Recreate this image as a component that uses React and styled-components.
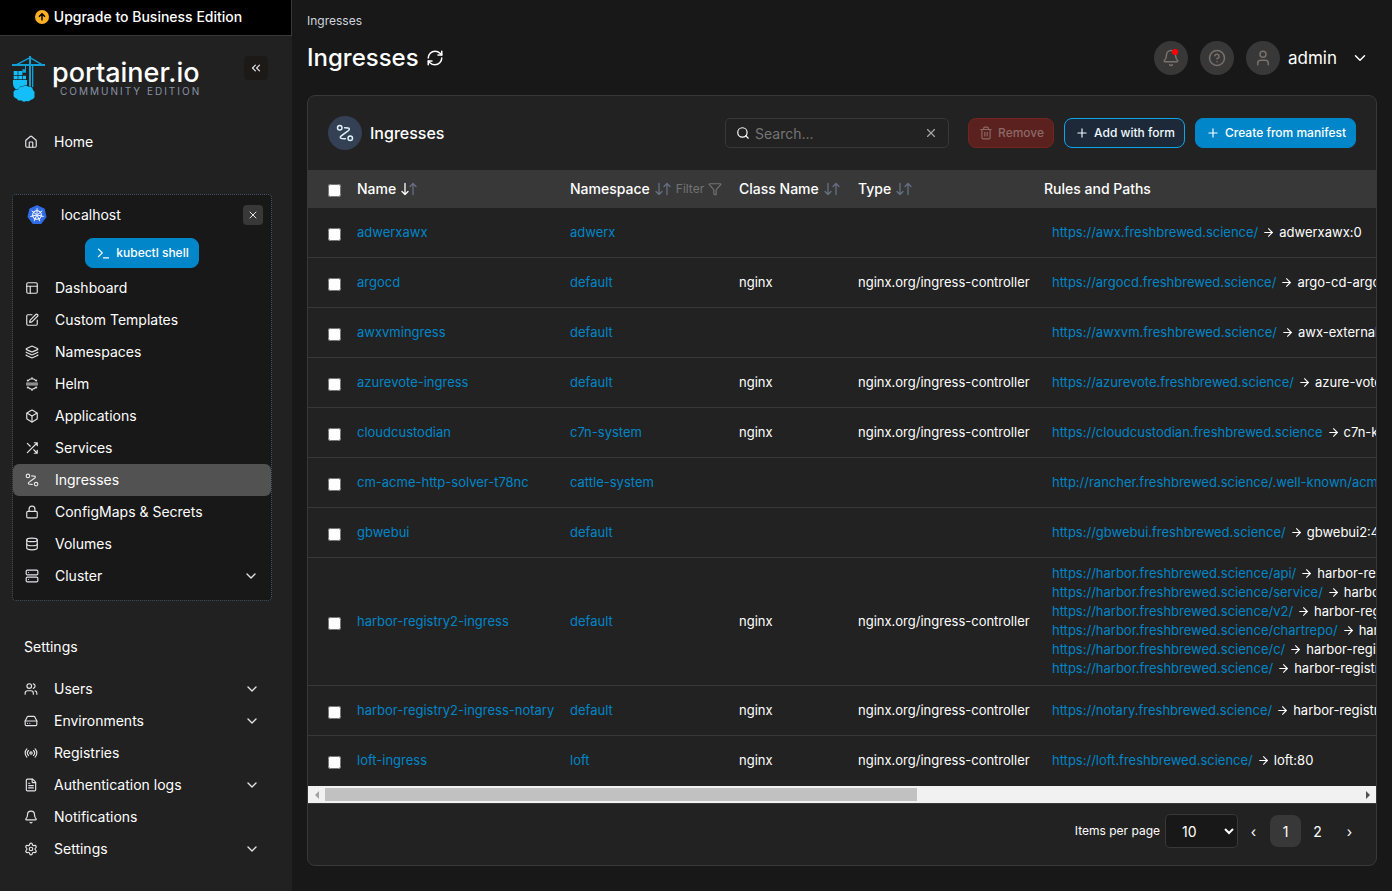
import React from "react";
import styled, { createGlobalStyle } from "styled-components";
import {
  ArrowRight,
  Bell,
  Box,
  ChevronDown,
  ChevronsLeft,
  Database,
  FileText,
  Filter,
  HardDrive,
  House,
  Layers,
  Lock,
  PanelsTopLeft,
  Plus,
  Radio,
  RefreshCw,
  Search,
  Server,
  Settings,
  SquarePen,
  Terminal,
  Trash2,
  User,
  Users,
  X,
  CircleQuestionMark,
} from "lucide-react";

const colors = {
  page: "#181818",
  panel: "#212121",
  card: "#222222",
  line: "#383838",
  active: "#525252",
  link: "#0086c9",
  muted: "#667085",
};

const GlobalStyle = createGlobalStyle`
  * {
    box-sizing: border-box;
  }

  body {
    margin: 0;
    background: ${colors.page};
    color: #ffffff;
    font-family: Inter, "Liberation Sans", sans-serif;
    font-size: 14px;
    line-height: 20px;
  }

  button,
  input,
  select {
    font-family: inherit;
  }

  a {
    color: inherit;
    text-decoration: none;
  }

  svg {
    flex-shrink: 0;
  }
`;

const Page = styled.div`
  display: flex;
  min-height: 100vh;
`;

/* sidebar */

const Sidebar = styled.aside`
  width: 292px;
  flex-shrink: 0;
  background: ${colors.panel};
`;

const UpgradeBar = styled.button`
  display: flex;
  align-items: center;
  justify-content: center;
  gap: 5px;
  width: 100%;
  height: 36px;
  padding: 0 14px 2px 0;
  border: 0;
  border-right: 1px solid ${colors.line};
  border-bottom: 1px solid ${colors.line};
  background: #000000;
  color: #ffffff;
  font-size: 14px;
  font-weight: 500;
`;

const SidebarBody = styled.div`
  padding: 20px 20px 0 12px;
`;

const Brand = styled.div`
  display: flex;
  align-items: flex-start;
  height: 46px;
  margin-bottom: 24px;
`;

const BrandText = styled.div`
  margin-left: 7px;
`;

const BrandName = styled.div`
  padding-top: 4px;
  font-size: 27px;
  line-height: 26px;
  font-weight: 500;
`;

const BrandEdition = styled.div`
  padding-left: 8px;
  color: #8a93a5;
  font-size: 10px;
  line-height: 10px;
  letter-spacing: 2px;
`;

const CollapseButton = styled.button`
  display: flex;
  align-items: center;
  justify-content: center;
  width: 24px;
  height: 24px;
  margin-left: auto;
  margin-right: 4px;
  padding: 0;
  border: 0;
  border-radius: 4px;
  background: #1c1917;
  color: #e4e4e7;
`;

const NavList = styled.ul`
  margin: 0;
  padding: 0;
  list-style: none;
`;

const NavLink = styled.a`
  display: flex;
  align-items: center;
  height: 32px;
  padding: 0 12px;
  border-radius: 6px;
  background: ${(props) => (props.$active ? colors.active : "transparent")};

  svg {
    color: #e4e4e7;
  }

  span {
    flex: 1;
    margin-left: 16px;
  }
`;

const Environment = styled.section`
  margin: 36px 0 36px;
  padding-bottom: 8px;
  border: 1px dotted #475467;
  border-radius: 4px;
  background: ${colors.page};
`;

const EnvironmentHead = styled.div`
  display: flex;
  align-items: center;
  height: 39px;
  padding: 0 8px 0 14px;

  span {
    flex: 1;
    margin-left: 14px;
  }
`;

const CloseButton = styled.button`
  display: flex;
  align-items: center;
  justify-content: center;
  width: 20px;
  height: 20px;
  padding: 0;
  border: 0;
  border-radius: 4px;
  background: ${colors.line};
  color: #e4e4e7;
`;

const ShellRow = styled.div`
  display: flex;
  justify-content: center;
  padding: 4px 0;
`;

const SidebarTitle = styled.h2`
  margin: 0 0 16px;
  padding: 0 12px;
  font-size: 14px;
  line-height: 20px;
  font-weight: 400;
`;

/* main area */

const Main = styled.main`
  flex: 1;
  min-width: 0;
  padding: 12px 15px 25px;
`;

const Breadcrumb = styled.div`
  color: #d0d5dd;
  font-size: 12px;
  line-height: 18px;
`;

const TitleRow = styled.header`
  display: flex;
  align-items: center;
  height: 56px;
  margin-bottom: 9px;
`;

const Title = styled.h1`
  margin: 0 7px 0 0;
  font-size: 24px;
  line-height: 32px;
  font-weight: 500;
`;

const PlainButton = styled.button`
  display: flex;
  align-items: center;
  padding: 0;
  border: 0;
  background: none;
  color: inherit;
`;

const HeaderTools = styled.div`
  display: flex;
  align-items: center;
  gap: 12px;
  margin-left: auto;
  padding-right: 8px;
`;

const RoundButton = styled.button`
  position: relative;
  display: flex;
  align-items: center;
  justify-content: center;
  width: 34px;
  height: 34px;
  padding: 0;
  border: 0;
  border-radius: 50%;
  background: ${colors.line};
  color: #78716c;
`;

const AlertDot = styled.i`
  position: absolute;
  top: 8px;
  right: 10px;
  width: 6px;
  height: 6px;
  border-radius: 50%;
  background: #ff0000;
`;

const UserMenu = styled(PlainButton)`
  font-size: 17px;

  span {
    margin: 0 14px 0 8px;
  }
`;

const Avatar = styled(RoundButton).attrs({ as: "i" })``;

const Card = styled.section`
  border: 1px solid ${colors.line};
  border-radius: 8px;
  background: ${colors.card};
  overflow: hidden;
`;

const CardHead = styled.div`
  display: flex;
  align-items: center;
  gap: 10px;
  height: 74px;
  padding: 0 20px;
`;

const CardIcon = styled.div`
  display: flex;
  align-items: center;
  justify-content: center;
  width: 34px;
  height: 34px;
  margin-right: -2px;
  border-radius: 50%;
  background: #344054;
  color: #e0f2fe;
`;

const CardTitle = styled.h2`
  flex: 1;
  margin: 0;
  font-size: 16px;
  line-height: 24px;
  font-weight: 500;
`;

const SearchBox = styled.label`
  display: flex;
  align-items: center;
  width: 224px;
  height: 30px;
  margin-right: 9px;
  padding: 0 10px;
  border: 1px solid ${colors.line};
  border-radius: 5px;

  input {
    flex: 1;
    min-width: 0;
    padding: 0 5px;
    border: 0;
    outline: 0;
    background: none;
    color: #ffffff;
    font-size: 14px;
  }

  input::placeholder {
    color: #757575;
  }
`;

const buttonLooks = {
  primary: "border-color: #0086c9; background: #0086c9; color: #ffffff;",
  secondary: "border-color: #0ba5ec; background: #1d2939; color: #f0f9ff;",
  danger: "border-color: #752521; background: #5a211e; color: #8c6966;",
};

const Button = styled.button`
  display: flex;
  align-items: center;
  gap: 5px;
  height: 30px;
  padding: 0 9px 0 10px;
  border: 1px solid;
  border-radius: 8px;
  font-size: 12px;
  line-height: 18px;
  font-weight: 500;
  white-space: nowrap;
  ${(props) => buttonLooks[props.$look]}
`;

const TableArea = styled.div`
  overflow: hidden;
`;

const Table = styled.table`
  width: 1865px;
  table-layout: fixed;
  border-collapse: separate;
  border-spacing: 0;
  font-size: 13px;
  line-height: 19px;
  white-space: nowrap;

  th {
    height: 38px;
    padding: 0 8px 1px;
    background: ${colors.line};
    font-size: 14px;
    font-weight: 500;
    text-align: left;
  }

  td {
    height: 50px;
    padding: 6px 8px 7px;
    border-bottom: 1px solid ${colors.line};
  }

  tr:last-child td {
    border-bottom: 0;
  }

  th:first-child,
  td:first-child {
    padding-left: 20px;
    padding-right: 0;
  }

  td:last-child {
    padding-left: 16px;
  }

  input {
    display: block;
    width: 13px;
    height: 13px;
    margin: 4px 0 0;
  }
`;

const HeadCell = styled.div`
  display: flex;
  align-items: center;
  gap: 5px;
`;

const SortButton = styled(PlainButton)`
  color: ${colors.muted};

  path:first-child {
    stroke: ${(props) => (props.$sorted ? "#ffffff" : colors.muted)};
  }
`;

const FilterButton = styled(PlainButton)`
  gap: 4px;
  color: #737373;
  font-size: 12px;
`;

const Link = styled.a`
  color: ${colors.link};
`;

const Rule = styled.div`
  display: flex;
  align-items: center;
  gap: 4px;
`;

const ScrollTrack = styled.div`
  display: flex;
  align-items: center;
  height: 17px;
  background: #f1f1f1;
`;

const ScrollArrow = styled.button`
  display: flex;
  align-items: center;
  justify-content: center;
  width: 17px;
  height: 17px;
  padding: 0;
  border: 0;
  background: none;
  color: ${(props) => (props.$end ? "#505050" : "#a3a3a3")};
`;

const ScrollRail = styled.div`
  flex: 1;
`;

const ScrollThumb = styled.div`
  width: calc(100% * 1068 / 1865);
  height: 13px;
  background: #c1c1c1;
`;

const CardFoot = styled.footer`
  display: flex;
  align-items: center;
  justify-content: flex-end;
  height: 62px;
  padding: 0 11px 7px 0;
  border-top: 1px solid ${colors.line};

  label {
    margin-right: 5px;
    font-size: 12px;
  }
`;

const PageSize = styled.select`
  width: 73px;
  height: 34px;
  padding: 0 0 0 12px;
  border: 1px solid ${colors.line};
  border-radius: 5px;
  background: ${colors.page};
  color: #ffffff;
  font-size: 14px;
`;

const Pages = styled.nav`
  display: flex;
  gap: 1px;
`;

const PageButton = styled.button`
  width: 31px;
  height: 32px;
  padding: 0;
  border: 0;
  border-radius: 8px;
  background: ${(props) => (props.$active ? colors.line : "none")};
  color: #ffffff;
  font-size: 14px;
`;

/* icons that lucide does not have */

const Stroke = ({ size = 14, width = 2, children }) => (
  <svg
    width={size}
    height={size}
    viewBox="0 0 24 24"
    fill="none"
    stroke="currentColor"
    strokeWidth={width}
    strokeLinecap="round"
    strokeLinejoin="round"
  >
    {children}
  </svg>
);

const RouteIcon = (props) => (
  <Stroke {...props}>
    <circle cx="5" cy="5" r="3" />
    <circle cx="19" cy="19" r="3" />
    <path d="M11.5 5h.43c3.05 0 4.57 0 5.15.55a2 2 0 0 1 .59 1.84c-.16.78-1.4 1.66-3.89 3.42l-4.06 2.88c-2.49 1.76-3.73 2.64-3.89 3.42a2 2 0 0 0 .59 1.84c.58.55 2.1.55 5.15.55h.93" />
  </Stroke>
);

const ShuffleIcon = (props) => (
  <Stroke {...props}>
    <path d="M16 3h5v5M4 20 21 3M21 16v5h-5M15 15l6 6M4 4l5 5" />
  </Stroke>
);

const HelmIcon = (props) => (
  <Stroke {...props}>
    <path d="M5 6.500C7 4 9.500 3 12 3s5 1 7 3.500M5 17.500C7 20 9.500 21 12 21s5-1 7-3.500" />
    <path d="M12 3V1M12 21v2M5 6.500 4 5.500M19 6.500l1-1M5 17.500l-1 1M19 17.500l1 1" />
    <path d="M2.500 10.500h19M2.500 13.500h19" strokeWidth="1.6" />
  </Stroke>
);

const SortIcon = () => (
  <svg
    width="16"
    height="16"
    viewBox="0 0 16 16"
    fill="none"
    stroke="currentColor"
    strokeWidth="1.3"
    strokeLinecap="round"
    strokeLinejoin="round"
  >
    <path d="M4 2.500v11M1 10.500l3 3 3-3" />
    <path d="M12 13.500v-11M9 5.500l3-3 3 3" />
  </svg>
);

const UpgradeIcon = () => (
  <svg width="14" height="14" viewBox="0 0 14 14">
    <circle cx="7" cy="7" r="7" fill="#fdb022" />
    <path
      d="M7 10.500V4M4 6.700 7 3.700l3 3"
      fill="none"
      stroke="#000000"
      strokeWidth="1.500"
    />
  </svg>
);

const spokes = [0, 1, 2, 3, 4, 5, 6].map((n) => (n * 360) / 7);

const KubernetesLogo = () => (
  <svg width="20" height="20" viewBox="0 0 20 20">
    <path
      d="M10 .8 17 4.100 18.800 11.900 14 18.200H6L1.200 11.900 3 4.100z"
      fill="#326ce5"
      stroke="#326ce5"
      strokeWidth="1.400"
      strokeLinejoin="round"
    />
    <g stroke="#ffffff" fill="none" strokeLinecap="round">
      <circle cx="10" cy="10" r="4.300" strokeWidth="1.100" />
      {spokes.map((angle) => (
        <path
          key={angle}
          d="M10 8.600V3.600"
          strokeWidth=".9"
          transform={`rotate(${angle} 10 10)`}
        />
      ))}
    </g>
    <circle cx="10" cy="10" r="1" fill="#ffffff" />
  </svg>
);

const CraneLogo = () => (
  <svg width="33" height="46" viewBox="36 168 99 138" fill="#13bef9">
    <g fill="#129fd3">
      <path d="M36 192h99v6H36zM87 168h6v94h-6zM96 197h4v65h-4z" />
      <path
        d="M90 173 50 194M90 173l36 21"
        fill="none"
        stroke="#129fd3"
        strokeWidth="4"
      />
      <path d="M75 197h3v21h-11v-10h8z" />
    </g>
    <path d="M41 213h12v12H41zM55 213h12v12H55zM41 227h12v11H41zM55 227h11v11H55zM68 227h10v11H68z" />
    <path d="M39 240h42v10c0 12-6 20-16 20H52c-8-2-13-10-13-20z" />
    <path
      d="M54 270c1-7 8-11 14-9 4-5 13-5 17-1 8-2 14 4 14 11 5 3 6 8 4 13 3 8-3 15-11 15-3 5-8 6-13 4-5 3-12 3-15-2-6 2-11 0-13-5-8-1-12-7-10-13-3-9 4-15 13-13z"
      stroke={colors.panel}
      strokeWidth="3"
      paintOrder="stroke"
    />
  </svg>
);

const environmentLinks = [
  { label: "Dashboard", icon: PanelsTopLeft },
  { label: "Custom Templates", icon: SquarePen },
  { label: "Namespaces", icon: Layers },
  { label: "Helm", icon: HelmIcon },
  { label: "Applications", icon: Box },
  { label: "Services", icon: ShuffleIcon },
  { label: "Ingresses", icon: RouteIcon, active: true },
  { label: "ConfigMaps & Secrets", icon: Lock },
  { label: "Volumes", icon: Database },
  { label: "Cluster", icon: Server, expandable: true },
];

const settingsLinks = [
  { label: "Users", icon: Users, expandable: true },
  { label: "Environments", icon: HardDrive, expandable: true },
  { label: "Registries", icon: Radio },
  { label: "Authentication logs", icon: FileText, expandable: true },
  { label: "Notifications", icon: Bell },
  { label: "Settings", icon: Settings, expandable: true },
];

const controller = "nginx.org/ingress-controller";

const ingresses = [
  {
    name: "adwerxawx",
    namespace: "adwerx",
    rules: [["https://awx.freshbrewed.science/", "adwerxawx:0"]],
  },
  {
    name: "argocd",
    namespace: "default",
    className: "nginx",
    rules: [["https://argocd.freshbrewed.science/", "argo-cd-argocd-server:80"]],
  },
  {
    name: "awxvmingress",
    namespace: "default",
    rules: [["https://awxvm.freshbrewed.science/", "awx-external-ip:80"]],
  },
  {
    name: "azurevote-ingress",
    namespace: "default",
    className: "nginx",
    rules: [["https://azurevote.freshbrewed.science/", "azure-vote-front:80"]],
  },
  {
    name: "cloudcustodian",
    namespace: "c7n-system",
    className: "nginx",
    rules: [["https://cloudcustodian.freshbrewed.science", "c7n-kube:80"]],
  },
  {
    name: "cm-acme-http-solver-t78nc",
    namespace: "cattle-system",
    rules: [
      [
        "http://rancher.freshbrewed.science/.well-known/acme-challenge/",
        "cm-acme-http-solver:8089",
      ],
    ],
  },
  {
    name: "gbwebui",
    namespace: "default",
    rules: [["https://gbwebui.freshbrewed.science/", "gbwebui2:4000"]],
  },
  {
    name: "harbor-registry2-ingress",
    namespace: "default",
    className: "nginx",
    rules: [
      ["https://harbor.freshbrewed.science/api/", "harbor-registry2-core:80"],
      ["https://harbor.freshbrewed.science/service/", "harbor-registry2-core:80"],
      ["https://harbor.freshbrewed.science/v2/", "harbor-registry2-core:80"],
      ["https://harbor.freshbrewed.science/chartrepo/", "harbor-registry2-core:80"],
      ["https://harbor.freshbrewed.science/c/", "harbor-registry2-core:80"],
      ["https://harbor.freshbrewed.science/", "harbor-registry2-portal:80"],
    ],
  },
  {
    name: "harbor-registry2-ingress-notary",
    namespace: "default",
    className: "nginx",
    rules: [["https://notary.freshbrewed.science/", "harbor-registry2-notary:4443"]],
  },
  {
    name: "loft-ingress",
    namespace: "loft",
    className: "nginx",
    rules: [["https://loft.freshbrewed.science/", "loft:80"]],
  },
];

const NavItem = ({ label, icon: Icon, active, expandable }) => (
  <li>
    <NavLink href="#" $active={active}>
      <Icon size={14} />
      <span>{label}</span>
      {expandable && <ChevronDown size={16} />}
    </NavLink>
  </li>
);

const Sort = ({ label, sorted }) => (
  <SortButton aria-label={`Sort by ${label}`} $sorted={sorted}>
    <SortIcon />
  </SortButton>
);

const SideMenu = () => (
  <Sidebar>
    <UpgradeBar>
      <UpgradeIcon />
      Upgrade to Business Edition
    </UpgradeBar>
    <SidebarBody>
      <Brand>
        <CraneLogo />
        <BrandText>
          <BrandName>portainer.io</BrandName>
          <BrandEdition>COMMUNITY EDITION</BrandEdition>
        </BrandText>
        <CollapseButton aria-label="Collapse sidebar">
          <ChevronsLeft size={14} />
        </CollapseButton>
      </Brand>
      <NavList>
        <NavItem label="Home" icon={House} />
      </NavList>
      <Environment>
        <EnvironmentHead>
          <KubernetesLogo />
          <span>localhost</span>
          <CloseButton aria-label="Close environment">
            <X size={12} />
          </CloseButton>
        </EnvironmentHead>
        <ShellRow>
          <Button $look="primary">
            <Terminal size={15} />
            kubectl shell
          </Button>
        </ShellRow>
        <NavList>
          {environmentLinks.map((link) => (
            <NavItem key={link.label} {...link} />
          ))}
        </NavList>
      </Environment>
      <SidebarTitle>Settings</SidebarTitle>
      <NavList>
        {settingsLinks.map((link) => (
          <NavItem key={link.label} {...link} />
        ))}
      </NavList>
    </SidebarBody>
  </Sidebar>
);

const IngressRow = ({ name, namespace, className, rules }) => (
  <tr>
    <td>
      <input type="checkbox" aria-label={`Select ${name}`} />
    </td>
    <td>
      <Link href="#">{name}</Link>
    </td>
    <td>
      <Link href="#">{namespace}</Link>
    </td>
    <td>{className}</td>
    <td>{className && controller}</td>
    <td>
      {rules.map(([url, service]) => (
        <Rule key={url}>
          <Link href="#">{url}</Link>
          <ArrowRight size={13} />
          <span>{service}</span>
        </Rule>
      ))}
    </td>
  </tr>
);

const IngressTable = () => (
  <TableArea>
    <Table>
      <colgroup>
        <col width="41" />
        <col width="213" />
        <col width="169" />
        <col width="119" />
        <col width="186" />
        <col />
      </colgroup>
      <thead>
        <tr>
          <th>
            <input type="checkbox" aria-label="Select all rows" />
          </th>
          <th>
            <HeadCell>
              Name <Sort label="Name" sorted />
            </HeadCell>
          </th>
          <th>
            <HeadCell>
              Namespace <Sort label="Namespace" />
              <FilterButton>
                Filter <Filter size={14} />
              </FilterButton>
            </HeadCell>
          </th>
          <th>
            <HeadCell>
              Class Name <Sort label="Class Name" />
            </HeadCell>
          </th>
          <th>
            <HeadCell>
              Type <Sort label="Type" />
            </HeadCell>
          </th>
          <th>Rules and Paths</th>
        </tr>
      </thead>
      <tbody>
        {ingresses.map((ingress) => (
          <IngressRow key={ingress.name} {...ingress} />
        ))}
      </tbody>
    </Table>
  </TableArea>
);

function App() {
  return (
    <Page>
      <GlobalStyle />
      <SideMenu />
      <Main>
        <Breadcrumb>Ingresses</Breadcrumb>
        <TitleRow>
          <Title>Ingresses</Title>
          <PlainButton aria-label="Refresh">
            <RefreshCw size={18} />
          </PlainButton>
          <HeaderTools>
            <RoundButton aria-label="Notifications">
              <Bell size={18} />
              <AlertDot />
            </RoundButton>
            <RoundButton aria-label="Help">
              <CircleQuestionMark size={18} />
            </RoundButton>
            <UserMenu>
              <Avatar>
                <User size={18} />
              </Avatar>
              <span>admin</span>
              <ChevronDown size={18} />
            </UserMenu>
          </HeaderTools>
        </TitleRow>
        <Card>
          <CardHead>
            <CardIcon>
              <RouteIcon size={18} />
            </CardIcon>
            <CardTitle>Ingresses</CardTitle>
            <SearchBox>
              <Search size={14} />
              <input type="text" placeholder="Search..." aria-label="Search" />
              <PlainButton aria-label="Clear search">
                <X size={14} color="#a3a3a3" />
              </PlainButton>
            </SearchBox>
            <Button $look="danger" disabled>
              <Trash2 size={14} />
              Remove
            </Button>
            <Button $look="secondary">
              <Plus size={14} />
              Add with form
            </Button>
            <Button $look="primary">
              <Plus size={14} />
              Create from manifest
            </Button>
          </CardHead>
          <IngressTable />
          <ScrollTrack>
            <ScrollArrow aria-label="Scroll left">
              <svg width="4" height="8" viewBox="0 0 4 8" fill="currentColor">
                <path d="M4 0v8L0 4z" />
              </svg>
            </ScrollArrow>
            <ScrollRail>
              <ScrollThumb />
            </ScrollRail>
            <ScrollArrow aria-label="Scroll right" $end>
              <svg width="4" height="8" viewBox="0 0 4 8" fill="currentColor">
                <path d="M0 0v8l4-4z" />
              </svg>
            </ScrollArrow>
          </ScrollTrack>
          <CardFoot>
            <label htmlFor="page-size">Items per page</label>
            <PageSize id="page-size" defaultValue="10">
              <option value="10">10</option>
              <option value="25">25</option>
              <option value="50">50</option>
            </PageSize>
            <Pages>
              <PageButton aria-label="Previous page">‹</PageButton>
              <PageButton $active>1</PageButton>
              <PageButton>2</PageButton>
              <PageButton aria-label="Next page">›</PageButton>
            </Pages>
          </CardFoot>
        </Card>
      </Main>
    </Page>
  );
}

export default App;
